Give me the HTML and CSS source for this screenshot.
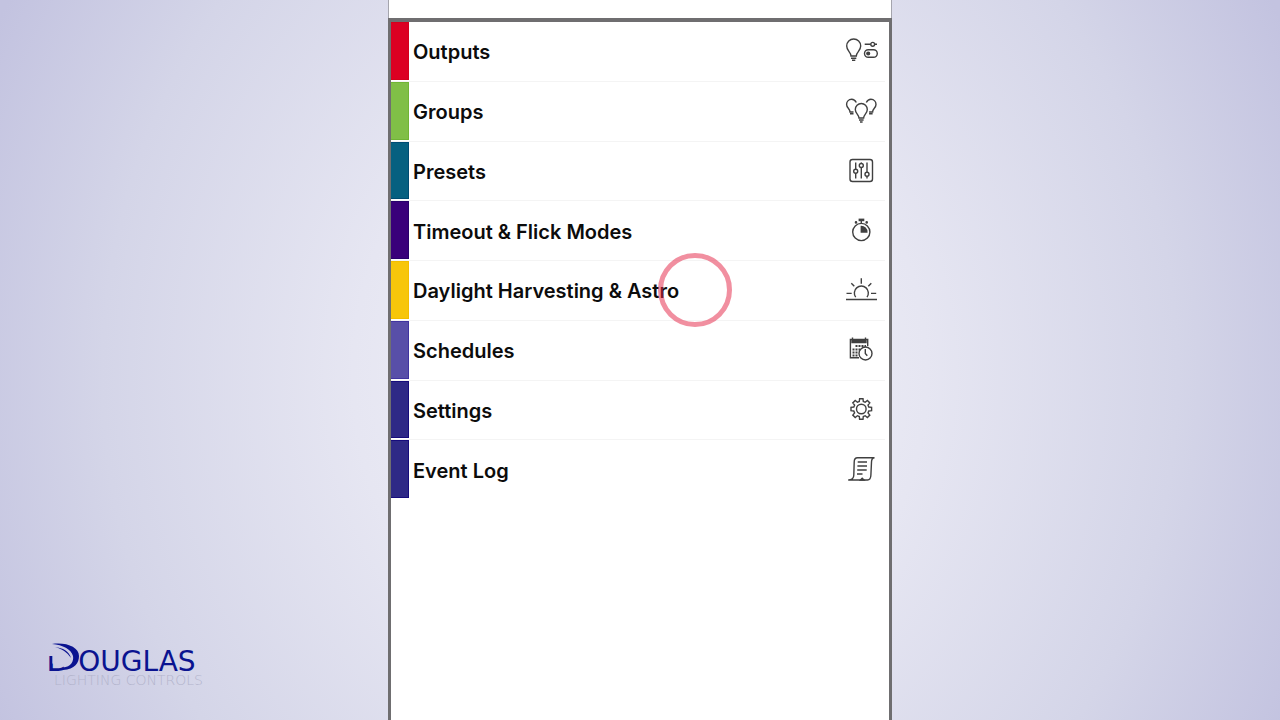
FILE: index.html
```html
<!DOCTYPE html>
<html lang="en">
<head>
    <meta charset="UTF-8">
    <meta name="viewport" content="width=device-width, initial-scale=1.0">
    <title>Douglas Lighting Controls</title>
    <link rel="stylesheet" href="styles.css">
</head>
<body>
    <div class="brand">
        <div class="brand-name">
            <span class="brand-initial">D</span><span>OUGLAS</span>
            <svg class="brand-swoosh" viewBox="0 0 36 30" aria-hidden="true">
                <path d="M6 3C20 1 33 6 33 15C33 22 29 28 17 29V26.5C25 26 28 20 27 15C25 8 17 4 6 3Z"/>
                <path d="M9 6C17 7 23 10 25 17C21 11 16 8 9 6Z"/>
            </svg>
        </div>
        <div class="brand-tagline">LIGHTING CONTROLS</div>
    </div>

    <main class="panel">
        <div class="topbar"></div>
        <nav class="screen">
            <div class="menu">
                <a class="item red" href="#outputs">
                    <span class="label">Outputs</span>
                    <svg class="icon" viewBox="0 0 36 30">
                        <path d="M8 21C8 17 3.7 16 3.7 11A7 7 0 0 1 17.7 11C17.7 16 13.3 17 13.3 21Z"/>
                        <path d="M8 23.2H13.3M9 25.2H12.3"/>
                        <path d="M21.7 9.3H27.8M31.6 9.3H34"/>
                        <circle cx="29.7" cy="9.3" r="1.9"/>
                        <rect x="21.5" y="14.7" width="12.8" height="7.6" rx="3.8"/>
                        <circle class="solid" cx="25.2" cy="18.5" r="1.4"/>
                    </svg>
                </a>
                <a class="item green" href="#groups">
                    <span class="label">Groups</span>
                    <svg class="icon" viewBox="0 0 36 30">
                        <path d="M16 23C16 19.5 12.3 18.5 12.3 14.5A6 6 0 0 1 24.3 14.5C24.3 18.5 20.6 19.5 20.6 23Z"/>
                        <path d="M16 25H20.6M17 27H19.6"/>
                        <path d="M13.3 7.5C12 5 10.5 4.3 8.7 4.3C5.5 4.3 3.6 6.7 3.6 9.5C3.6 13 7 13.5 7 17H10.5"/>
                        <path d="M23.3 7.5C24.6 5 26.1 4.3 27.9 4.3C31.1 4.3 33 6.7 33 9.5C33 13 29.6 13.5 29.6 17H26.1"/>
                        <path d="M7 18.8H10.5M26.1 18.8H29.6"/>
                    </svg>
                </a>
                <a class="item teal" href="#presets">
                    <span class="label">Presets</span>
                    <svg class="icon" viewBox="0 0 36 30">
                        <rect x="7" y="4.5" width="22.5" height="22" rx="2.5"/>
                        <path d="M12.7 7.5V14.3M12.7 18.3V23.5M18.3 7.5V8.5M18.3 12.5V23.5M24 7.5V17.3M24 21.3V23.5"/>
                        <circle cx="12.7" cy="16.3" r="2"/>
                        <circle cx="18.3" cy="10.5" r="2"/>
                        <circle cx="24" cy="19.3" r="2"/>
                    </svg>
                </a>
                <a class="item violet" href="#timeout">
                    <span class="label">Timeout &amp; Flick Modes</span>
                    <svg class="icon" viewBox="0 0 36 30">
                        <circle cx="18.3" cy="17" r="8.6"/>
                        <path class="solid" d="M18.3 17V11.5A5.5 5.5 0 0 1 23.8 17Z"/>
                        <path class="solid" d="M16.3 4.3H20.6V5.5H16.3Z"/>
                        <path d="M18.3 5.5V8"/>
                        <circle class="solid" cx="13" cy="7.4" r="0.6"/>
                        <circle class="solid" cx="23.7" cy="7.4" r="0.6"/>
                    </svg>
                </a>
                <a class="item yellow" href="#daylight">
                    <span class="label">Daylight Harvesting &amp; Astro</span>
                    <svg class="icon" viewBox="0 0 36 30">
                        <path d="M3 25.5H34M12.7 23.2A7 7 0 1 1 24 23.2"/>
                        <path d="M18.3 4.3V9.7M8.3 9.3L11.3 12.3M28.3 9.3L25.3 12.3M3.5 19.4H8.7M28 19.4H33.2"/>
                    </svg>
                </a>
                <a class="item lilac" href="#schedules">
                    <span class="label">Schedules</span>
                    <svg class="icon" viewBox="0 0 36 30">
                        <path d="M16 23.7H7.4V5.5H24.7V12"/>
                        <path class="solid" d="M9 5.8H23V8.5H9Z"/>
                        <path d="M9.5 3.5V6M22.5 3.5V6"/>
                        <path class="dots" d="M12.5 12H23M9.5 15.5H17M9.5 18.5H15M9.5 21.5H15"/>
                        <circle cx="22.5" cy="19.5" r="6.5"/>
                        <path d="M22.3 15V19.5L24.3 21.7"/>
                    </svg>
                </a>
                <a class="item blue" href="#settings">
                    <span class="label">Settings</span>
                    <svg class="icon" viewBox="0 0 36 30">
                        <path d="M16.3 7.5L16.6 4.7H20L20.3 7.5L22.2 8.3L24.4 6.5L26.8 8.9L25 11.1L25.8 13L28.6 13.3V16.7L25.8 17L25 18.9L26.8 21.1L24.4 23.5L22.2 21.7L20.3 22.5L20 25.3H16.6L16.3 22.5L14.4 21.7L12.2 23.5L9.8 21.1L11.6 18.9L10.8 17L8 16.7V13.3L10.8 13L11.6 11.1L9.8 8.9L12.2 6.5L14.4 8.3Z"/>
                        <circle cx="18.3" cy="15" r="4.8"/>
                    </svg>
                </a>
                <a class="item blue" href="#log">
                    <span class="label">Event Log</span>
                    <svg class="icon" viewBox="0 0 36 30">
                        <path d="M31.5 3.7H14.5C12 3.7 11.2 5 11.2 8L10.8 21C10.8 24.5 8.5 26 5.2 26H24.5C27.2 26 27.8 24 27.9 21L28.5 8C28.5 5.5 29.5 4 31.5 3.7Z"/>
                        <path d="M14.7 8H24M14.4 12H24M14.2 16H23.7M14 20H19.5"/>
                        <path class="solid" d="M17.5 26L19.2 24.3L21 26Z"/>
                    </svg>
                </a>
            </div>
        </nav>
        <div class="tap-marker"></div>
    </main>
</body>
</html>
```

FILE: styles.css
```css
body {
    font-family: Inter, Arial, sans-serif;
    background: radial-gradient(ellipse 56% 110% at 50% 52%, #f4f4fa 0%, #e6e6f2 40%, #d4d5e8 75%, #c3c3e0 100%);
    margin: 0;
    min-height: 100vh;
    display: grid;
    grid-template-columns: 1fr minmax(0, 504px) 1fr;
}

.panel {
    position: relative;
    display: flex;
    flex-direction: column;
    background-color: #fff;
}

.topbar {
    height: 18px;
    border: solid #a5a5ad;
    border-width: 0 1px;
}

.screen {
    flex: 1;
    border: solid #6f6e70;
    border-width: 4px 3px 0;
    padding-right: 4px;
}

.menu {
    display: grid;
    grid-template-rows: repeat(8, 1fr);
    height: 478px;
}

.item {
    display: flex;
    align-items: center;
    border-bottom: 1px solid #f4f4f4;
    padding-right: 6px;
    color: #0c0c0c;
    text-decoration: none;
}

.item:last-child {
    border-bottom-color: transparent;
}

.item::before {
    content: "";
    box-sizing: border-box;
    align-self: stretch;
    width: 18px;
    margin: 0 4px 1px 0;
    background-color: var(--swatch);
    border: solid var(--edge);
    border-width: 1px 1px 1px 0;
}

.red { --swatch: #dc0022; --edge: #d4001c; }
.green { --swatch: #80bf47; --edge: #70b436; }
.teal { --swatch: #066080; --edge: #004b72; }
.violet { --swatch: #39007a; --edge: #28006c; }
.yellow { --swatch: #f7c60a; --edge: #f2bd00; }
.lilac { --swatch: #584fa8; --edge: #4034a0; }
.blue { --swatch: #2e2986; --edge: #160c7c; }

.label {
    flex: 1;
    font-size: 20px;
    font-weight: 600;
    line-height: 24px;
    padding-top: 2px;
}

.icon {
    width: 36px;
    height: 30px;
    margin-bottom: 2px;
    fill: none;
    stroke: #404040;
    stroke-width: 1.4;
}

.icon .solid {
    fill: #404040;
}

.icon .dots {
    stroke-width: 2;
    stroke-dasharray: 2 1;
}

/* ring shown where the screen is tapped */
.tap-marker {
    position: absolute;
    left: 270px;
    top: 253px;
    box-sizing: border-box;
    width: 74px;
    height: 74px;
    border: 5px solid rgba(228, 40, 72, 0.52);
    border-radius: 50%;
}

.brand {
    align-self: end;
    padding: 0 0 34px 46px;
    font-family: "DejaVu Sans", sans-serif;
    color: #0a1390;
}

.brand-name {
    position: relative;
    font-size: 28px;
    line-height: 20px;
}

/* lower left part of the letter, the swoosh closes it */
.brand-initial {
    display: inline-block;
    padding-right: 6px;
    font-size: 34px;
    line-height: 30px;
    clip-path: polygon(0 40%, 20% 40%, 20% 65%, 55% 75%, 55% 100%, 0 100%);
}

.brand-swoosh {
    position: absolute;
    left: 0;
    top: -3px;
    width: 36px;
    height: 30px;
    fill: #0a1390;
}

.brand-tagline {
    font-size: 14px;
    font-weight: 200;
    line-height: 12px;
    padding-left: 8px;
    color: #b3b4cc;
}
```
